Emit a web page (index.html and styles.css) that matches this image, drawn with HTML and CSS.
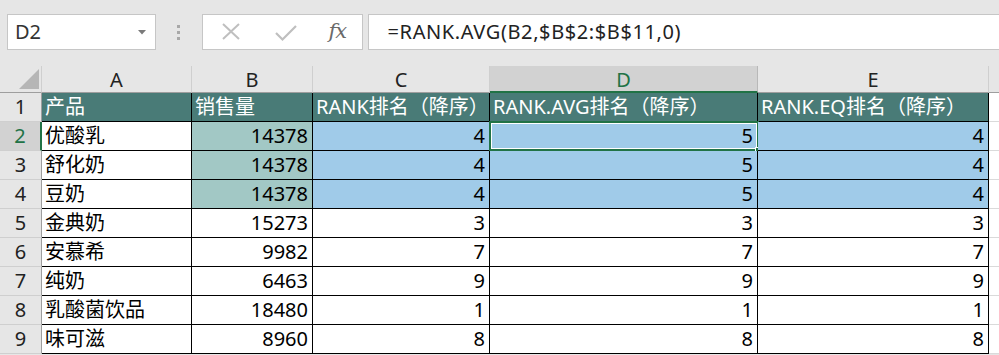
FILE: index.html
```html
<!DOCTYPE html>
<html lang="zh-CN">
<head>
<meta charset="utf-8">
<title>RANK.AVG</title>
<link rel="stylesheet" href="styles.css">
</head>
<body>
<div class="top">
  <div class="namebox">
    <span class="nb-text">D2</span>
    <svg class="nb-arrow" width="8" height="5" viewBox="0 0 8 5"><path d="M0 0H8L4 4.5Z" fill="#7a7a7a"/></svg>
  </div>
  <div class="grip"><i></i><i></i><i></i></div>
  <div class="btns">
    <svg class="ico-x" width="20" height="18" viewBox="0 0 20 18"><path d="M2 1L18 16M18 1L2 16" stroke="#bfbfbf" stroke-width="2"/></svg>
    <svg class="ico-ok" width="22" height="18" viewBox="0 0 22 18"><path d="M1 9L7.5 15.5L21 2" stroke="#bfbfbf" stroke-width="2.2" fill="none"/></svg>
    <span class="fx">fx</span>
  </div>
  <div class="formula">=RANK.AVG(B2,$B$2:$B$11,0)</div>
</div>
<div class="sheet">
  <div class="corner"><svg width="42" height="27" viewBox="0 0 42 27"><path d="M19 23H39V3Z" fill="#b6b6b6"/></svg></div>
  <div class="ch">A</div>
  <div class="ch">B</div>
  <div class="ch">C</div>
  <div class="ch sel">D</div>
  <div class="ch">E</div>
  <div class="ch fill"></div>

  <div class="rh">1</div>
  <div class="c hd">产品</div>
  <div class="c hd">销售量</div>
  <div class="c hd">RANK排名（降序）</div>
  <div class="c hd dsel">RANK.AVG排名（降序）</div>
  <div class="c hd">RANK.EQ排名（降序）</div>
  <div class="g"></div>

  <div class="rh sel">2</div>
  <div class="c">优酸乳</div>
  <div class="c n tl">14378</div>
  <div class="c n bl">4</div>
  <div class="c n bl active">5<span class="cursor"></span><span class="handle"></span></div>
  <div class="c n bl">4</div>
  <div class="g"></div>

  <div class="rh">3</div>
  <div class="c">舒化奶</div>
  <div class="c n tl">14378</div>
  <div class="c n bl">4</div>
  <div class="c n bl">5</div>
  <div class="c n bl">4</div>
  <div class="g"></div>

  <div class="rh">4</div>
  <div class="c">豆奶</div>
  <div class="c n tl">14378</div>
  <div class="c n bl">4</div>
  <div class="c n bl">5</div>
  <div class="c n bl">4</div>
  <div class="g"></div>

  <div class="rh">5</div>
  <div class="c">金典奶</div>
  <div class="c n">15273</div>
  <div class="c n">3</div>
  <div class="c n">3</div>
  <div class="c n">3</div>
  <div class="g"></div>

  <div class="rh">6</div>
  <div class="c">安慕希</div>
  <div class="c n">9982</div>
  <div class="c n">7</div>
  <div class="c n">7</div>
  <div class="c n">7</div>
  <div class="g"></div>

  <div class="rh">7</div>
  <div class="c">纯奶</div>
  <div class="c n">6463</div>
  <div class="c n">9</div>
  <div class="c n">9</div>
  <div class="c n">9</div>
  <div class="g"></div>

  <div class="rh">8</div>
  <div class="c">乳酸菌饮品</div>
  <div class="c n">18480</div>
  <div class="c n">1</div>
  <div class="c n">1</div>
  <div class="c n">1</div>
  <div class="g"></div>

  <div class="rh">9</div>
  <div class="c">味可滋</div>
  <div class="c n">8960</div>
  <div class="c n">8</div>
  <div class="c n">8</div>
  <div class="c n">8</div>
  <div class="g"></div>
</div>
</body>
</html>
```
FILE: styles.css
```css
* { box-sizing: border-box; }
html, body {
  margin: 0;
  padding: 0;
  width: 999px;
  height: 355px;
  overflow: hidden;
  background: #e6e6e6;
  font-family: "Noto Sans", "Noto Sans CJK SC", sans-serif;
}
.top {
  height: 66px;
  display: flex;
  align-items: flex-start;
  padding-top: 14px;
  padding-left: 7px;
  white-space: nowrap;
}
.namebox {
  width: 151px;
  height: 36px;
  background: #fff;
  border: 1px solid #c6c6c6;
  display: flex;
  align-items: center;
  justify-content: space-between;
  padding: 0 9px 0 7px;
}
.nb-text {
  font-size: 20px;
  color: #333;
  line-height: 1;
}
.nb-arrow { margin-top: 1px; }
.grip {
  width: 46px;
  height: 36px;
  display: flex;
  flex-direction: column;
  align-items: center;
  justify-content: center;
  gap: 3px;
}
.grip i {
  display: block;
  width: 3px;
  height: 3px;
  background: #a8a8a8;
}
.btns {
  width: 163px;
  height: 36px;
  background: #fff;
  border: 1px solid #c6c6c6;
  display: flex;
  align-items: center;
  padding-left: 18px;
}
.ico-x { margin-right: 34px; }
.ico-ok { margin-right: 32px; margin-top: 1px; }
.fx {
  font-family: "DejaVu Serif", "Liberation Serif", serif;
  font-style: italic;
  font-size: 21px;
  color: #6a6a6a;
  letter-spacing: -1px;
  margin-top: -2px;
}
.formula {
  margin-left: 5px;
  width: 640px;
  height: 36px;
  background: #fff;
  border: 1px solid #c6c6c6;
  border-right: none;
  padding-left: 19px;
  font-size: 20px;
  letter-spacing: 0.6px;
  line-height: 34px;
  color: #222;
}
.sheet {
  display: grid;
  grid-template-columns: 42px 150px 121px 177px 268px 231px 11px;
  grid-template-rows: 27px repeat(9, 29px);
}
.corner {
  background: #e6e6e6;
  border-right: 1px solid #cfcfcf;
  border-bottom: 1px solid #9e9e9e;
}
.corner svg { display: block; }
.ch {
  background: #e6e6e6;
  border-right: 1px solid #cfcfcf;
  border-bottom: 1px solid #9e9e9e;
  text-align: center;
  font-size: 20px;
  line-height: 27px;
  color: #222;
}
.ch.sel {
  background: #d2d2d2;
  color: #217346;
  border-bottom: 2px solid #217346;
  border-right-color: #b8b8b8;
}
.ch.fill { border-right: none; }
.rh {
  background: #e6e6e6;
  border-right: 1px solid #9e9e9e;
  border-bottom: 1px solid #cfcfcf;
  text-align: center;
  font-size: 20px;
  line-height: 28px;
  color: #222;
}
.rh.sel {
  background: #d2d2d2;
  color: #217346;
  border-right: 2px solid #217346;
}
.c {
  position: relative;
  background: #fff;
  border-right: 1px solid #000;
  border-bottom: 1px solid #000;
  padding: 0 3px;
  font-size: 20px;
  line-height: 28px;
  color: #000;
  white-space: nowrap;
  overflow: visible;
}
.c.n { text-align: right; padding-right: 4px; }
.c.hd { background: #497b77; color: #fff; }
.c.tl { background: #a2c8c5; }
.c.bl { background: #a0cbe9; }
.g {
  background: #fff;
  border-bottom: 1px solid #dadada;
}
.cursor {
  position: absolute;
  left: -1px;
  top: -1px;
  right: -2px;
  bottom: -1px;
  border: 2px solid #217346;
  box-shadow: inset 0 0 0 1px #fff;
  pointer-events: none;
}
.handle {
  position: absolute;
  right: -5px;
  bottom: -4px;
  width: 7px;
  height: 7px;
  background: #217346;
  border: 1px solid #fff;
}
```
